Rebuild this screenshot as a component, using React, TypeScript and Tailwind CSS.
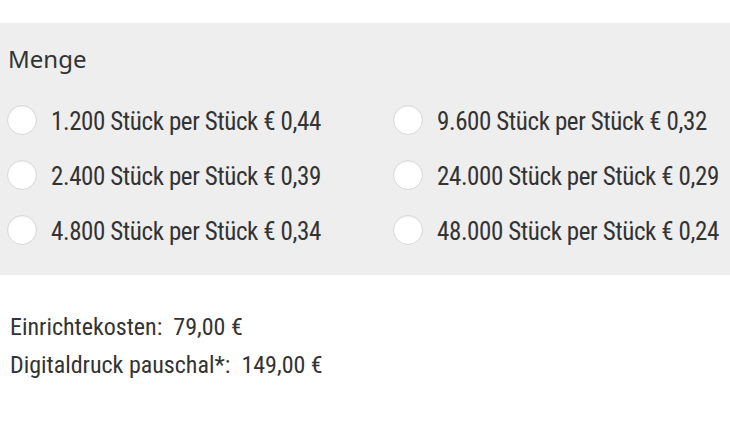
import React from "react";

const left = [
  "1.200 Stück per Stück € 0,44",
  "2.400 Stück per Stück € 0,39",
  "4.800 Stück per Stück € 0,34",
];
const right = [
  "9.600 Stück per Stück € 0,32",
  "24.000 Stück per Stück € 0,29",
  "48.000 Stück per Stück € 0,24",
];

function Option({ label }: { label: string }) {
  return (
    <label className="flex items-center h-[55px] gap-[14px] cursor-pointer">
      <span className="w-[30px] h-[30px] rounded-full bg-white border border-[#d8d8d8] shadow-[inset_0_1px_2px_rgba(0,0,0,0.06)] shrink-0" />
      <span className="pt-[3px] text-[25px] tracking-[-0.4px] leading-none text-[#333] whitespace-nowrap font-['Roboto_Condensed','Liberation_Sans',sans-serif]">
        {label}
      </span>
    </label>
  );
}

export default function App() {
  return (
    <div className="w-[730px] h-[433px] bg-white overflow-hidden">
      <div className="mt-[23px] h-[252px] bg-[#eeeeee] pl-[7px] pt-[21px]">
        <div className="h-[30px] leading-[30px] pl-px text-[24px] text-[#333] font-['Noto_Sans',sans-serif]">
          Menge
        </div>
        <div className="mt-[18px] grid grid-cols-[386px_1fr]">
          <div className="flex flex-col">
            {left.map((l) => (
              <Option key={l} label={l} />
            ))}
          </div>
          <div className="flex flex-col">
            {right.map((l) => (
              <Option key={l} label={l} />
            ))}
          </div>
        </div>
      </div>
      <div className="mt-[33px] pl-[10px] text-[24px] tracking-[0px] leading-[38px] text-[#333] font-['Roboto_Condensed','Liberation_Sans',sans-serif] whitespace-pre">
        <div>Einrichtekosten:  79,00 €</div>
        <div>Digitaldruck pauschal*:  149,00 €</div>
      </div>
    </div>
  );
}
